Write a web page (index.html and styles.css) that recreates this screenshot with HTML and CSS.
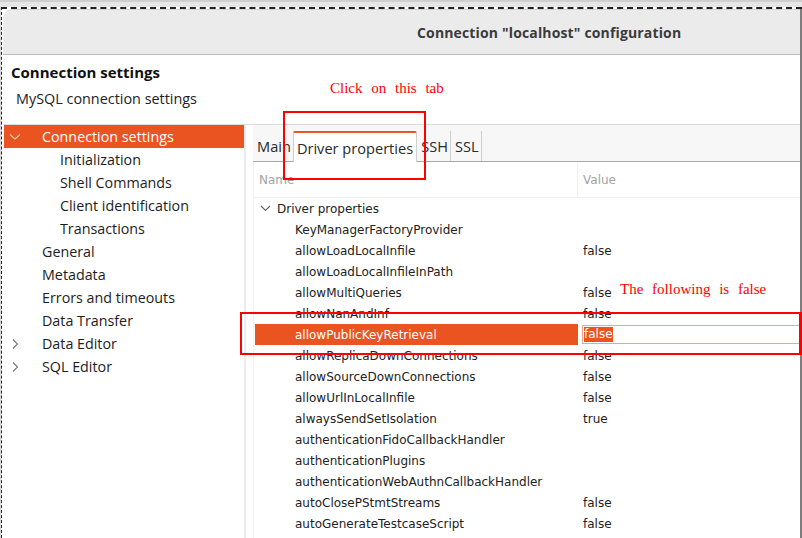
FILE: index.html
```html
<!DOCTYPE html>
<html>
<head>
<meta charset="utf-8">
<title>Connection configuration</title>
<link rel="stylesheet" href="styles.css">
</head>
<body>
<div class="desk">
  <div class="outline">
    <div class="window">
      <div class="titlebar"><span class="title">Connection "localhost" configuration</span></div>
      <div class="header">
        <div class="h-title">Connection settings</div>
        <div class="h-sub">MySQL connection settings</div>
      </div>
      <div class="content">
        <div class="tree">
          <div class="t-row top selected"><span class="chev"><svg width="12" height="8" viewBox="0 0 12 8"><path d="M1 1.5 L6 6 L11 1.5" fill="none" stroke="#f6c9b6" stroke-width="1.1"/></svg></span>Connection settings</div>
          <div class="t-row child">Initialization</div>
          <div class="t-row child">Shell Commands</div>
          <div class="t-row child">Client identification</div>
          <div class="t-row child">Transactions</div>
          <div class="t-row top"><span class="chev"></span>General</div>
          <div class="t-row top"><span class="chev"></span>Metadata</div>
          <div class="t-row top"><span class="chev"></span>Errors and timeouts</div>
          <div class="t-row top"><span class="chev"></span>Data Transfer</div>
          <div class="t-row top"><span class="chev"><svg width="12" height="12" viewBox="0 0 12 12"><path d="M4 1.5 L8.5 6 L4 10.5" fill="none" stroke="#777" stroke-width="1.1"/></svg></span>Data Editor</div>
          <div class="t-row top"><span class="chev"><svg width="12" height="12" viewBox="0 0 12 12"><path d="M4 1.5 L8.5 6 L4 10.5" fill="none" stroke="#777" stroke-width="1.1"/></svg></span>SQL Editor</div>
        </div>
        <div class="panel">
          <div class="tabs">
            <div class="tab">Main</div>
            <div class="tab active">Driver properties</div>
            <div class="tab">SSH</div>
            <div class="tab">SSL</div>
          </div>
          <div class="table">
            <div class="thead">
              <div class="c-name">Name</div>
              <div class="c-val">Value</div>
            </div>
            <div class="row group"><div class="c-name"><span class="gchev"><svg width="11" height="7" viewBox="0 0 11 7"><path d="M1 1 L5.5 5.5 L10 1" fill="none" stroke="#666" stroke-width="1.1"/></svg></span>Driver properties</div><div class="c-val"></div></div>
            <div class="row"><div class="c-name">KeyManagerFactoryProvider</div><div class="c-val"></div></div>
            <div class="row"><div class="c-name">allowLoadLocalInfile</div><div class="c-val">false</div></div>
            <div class="row"><div class="c-name">allowLoadLocalInfileInPath</div><div class="c-val"></div></div>
            <div class="row"><div class="c-name">allowMultiQueries</div><div class="c-val">false</div></div>
            <div class="row"><div class="c-name">allowNanAndInf</div><div class="c-val">false</div></div>
            <div class="row selected"><div class="c-name">allowPublicKeyRetrieval</div><div class="c-val"><div class="editor"><span class="sel">false</span></div></div></div>
            <div class="row"><div class="c-name">allowReplicaDownConnections</div><div class="c-val">false</div></div>
            <div class="row"><div class="c-name">allowSourceDownConnections</div><div class="c-val">false</div></div>
            <div class="row"><div class="c-name">allowUrlInLocalInfile</div><div class="c-val">false</div></div>
            <div class="row"><div class="c-name">alwaysSendSetIsolation</div><div class="c-val">true</div></div>
            <div class="row"><div class="c-name">authenticationFidoCallbackHandler</div><div class="c-val"></div></div>
            <div class="row"><div class="c-name">authenticationPlugins</div><div class="c-val"></div></div>
            <div class="row"><div class="c-name">authenticationWebAuthnCallbackHandler</div><div class="c-val"></div></div>
            <div class="row"><div class="c-name">autoClosePStmtStreams</div><div class="c-val">false</div></div>
            <div class="row"><div class="c-name">autoGenerateTestcaseScript</div><div class="c-val">false</div></div>
          </div>
        </div>
      </div>
    </div>
  </div>
  <div class="note note-tab">Click on this tab</div>
  <div class="redbox box-tab"></div>
  <div class="note note-false">The following is false</div>
  <div class="redbox box-row"></div>
</div>
</body>
</html>
```

FILE: styles.css
```css
* { box-sizing: border-box; }
html, body { margin: 0; padding: 0; }
body {
  width: 802px;
  height: 538px;
  overflow: hidden;
  background: #d8d8d8;
  font-family: "Open Sans", "DejaVu Sans", sans-serif;
  color: #1f1f1f;
}
.desk {
  position: relative;
  width: 802px;
  height: 538px;
  padding-top: 7px;
  background: linear-gradient(#cfcfcf 0, #cfcfcf 2px, #e6e6e6 2px, #e6e6e6 7px);
  background-repeat: no-repeat;
  background-size: 100% 7px;
}
.outline {
  height: 531px;
  margin-left: 1px;
  border-top: 2px dashed #222;
  border-left: 1px dashed #222;
  background: #fff;
  padding-left: 1px;
}
.window {
  height: 529px;
  background: #fff;
  border-right: 2px solid #7d7d7d;
  border-top-left-radius: 9px;
  overflow: hidden;
  display: flex;
  flex-direction: column;
}
.titlebar {
  height: 46px;
  flex: none;
  background: #ebebeb;
  border-bottom: 1px solid #bdbdbd;
  border-top: 1px solid #d5d5d5;
  border-top-left-radius: 9px;
  display: flex;
  align-items: center;
  padding-left: 414px;
}
.title {
  font-family: "Open Sans", sans-serif;
  font-weight: 700;
  font-size: 14px;
  color: #3b3b3b;
  letter-spacing: 0.15px;
}
.header {
  flex: none;
  height: 70px;
  padding: 7px 0 0 8px;
  border-bottom: 1px solid #dcdcdc;
}
.h-title {
  font-weight: 700;
  font-size: 15px;
  line-height: 20px;
  color: #111;
}
.h-sub {
  margin-top: 7px;
  padding-left: 5px;
  font-size: 14.4px;
  line-height: 20px;
  color: #222;
}
.content {
  flex: 1;
  display: flex;
  min-height: 0;
}
.tree {
  width: 243px;
  flex: none;
  padding: 0 0 0 1px;
  border-right: 2px solid #ececec;
}
.t-row {
  height: 23px;
  display: flex;
  align-items: center;
  font-size: 14.3px;
  color: #1d1d1d;
  white-space: nowrap;
}
.t-row.selected {
  background: #e95420;
  color: #fff;
  width: 240px;
}
.chev {
  width: 38px;
  flex: none;
  padding-left: 5px;
  display: flex;
  align-items: center;
}
.t-row.child { padding-left: 56px; }
.panel {
  flex: 1;
  display: flex;
  flex-direction: column;
  padding-left: 7px;
  background: #fff;
}
.tabs {
  height: 37px;
  flex: none;
  background: #f7f7f7;
  border-bottom: 1px solid #a8a8a8;
  display: flex;
  align-items: flex-end;
}
.tab {
  height: 30px;
  padding: 0 2px 0 4px;
  display: flex;
  align-items: center;
  font-size: 14.6px;
  color: #2a2a2a;
  border-right: 1px solid #cfcfcf;
}
.tab.active {
  background: #fff;
  border-top: 2px solid #e95420;
  border-left: 1px solid #cfcfcf;
  border-right: 1px solid #cfcfcf;
  padding: 0 3px 0 3px;
  margin-left: -1px;
  margin-bottom: -1px;
  height: 31px;
  border-top-left-radius: 2px;
  border-top-right-radius: 2px;
}
.table {
  flex: 1;
  border-left: 1px solid #efefef;
  font-family: "DejaVu Sans", sans-serif;
  font-size: 12px;
  color: #222;
}
.thead {
  height: 36px;
  display: flex;
  border-bottom: 1px solid #f0f0f0;
  color: #a3a3a3;
  font-size: 12px;
}
.thead .c-name {
  width: 324px;
  padding-left: 5px;
  display: flex;
  align-items: center;
  border-right: 1px solid #f0f0f0;
}
.thead .c-val {
  padding-left: 5px;
  display: flex;
  align-items: center;
}
.row {
  height: 21px;
  display: flex;
  align-items: center;
}
.row .c-name {
  width: 324px;
  flex: none;
  padding-left: 41px;
  white-space: nowrap;
  height: 100%;
  display: flex;
  align-items: center;
}
.row .c-val {
  flex: 1;
  padding-left: 5px;
  height: 100%;
  display: flex;
  align-items: center;
}
.row.group .c-name { padding-left: 6px; }
.gchev {
  width: 17px;
  display: flex;
  align-items: center;
}
.row.selected .c-name {
  background: #e95420;
  color: #fff;
  margin-left: 1px;
  width: 323px;
  padding-left: 40px;
}
.row.selected .c-val { padding-left: 4px; }
.editor {
  width: 100%;
  height: 19px;
  border: 1px solid #f1a587;
  display: flex;
  align-items: center;
  padding-left: 1px;
}
.sel {
  background: #e95420;
  color: #fff;
  line-height: 15px;
}
.note {
  position: absolute;
  font-family: "Liberation Serif", serif;
  font-size: 15px;
  color: #f00;
  word-spacing: 5px;
  white-space: nowrap;
}
.note-tab { left: 330px; top: 80px; }
.note-false { left: 620px; top: 281px; }
.redbox {
  position: absolute;
  border: 2px solid #f00;
}
.box-tab { left: 283px; top: 111px; width: 143px; height: 69px; }
.box-row { left: 240px; top: 312px; width: 562px; height: 43px; border-right-width: 3px; }
```
